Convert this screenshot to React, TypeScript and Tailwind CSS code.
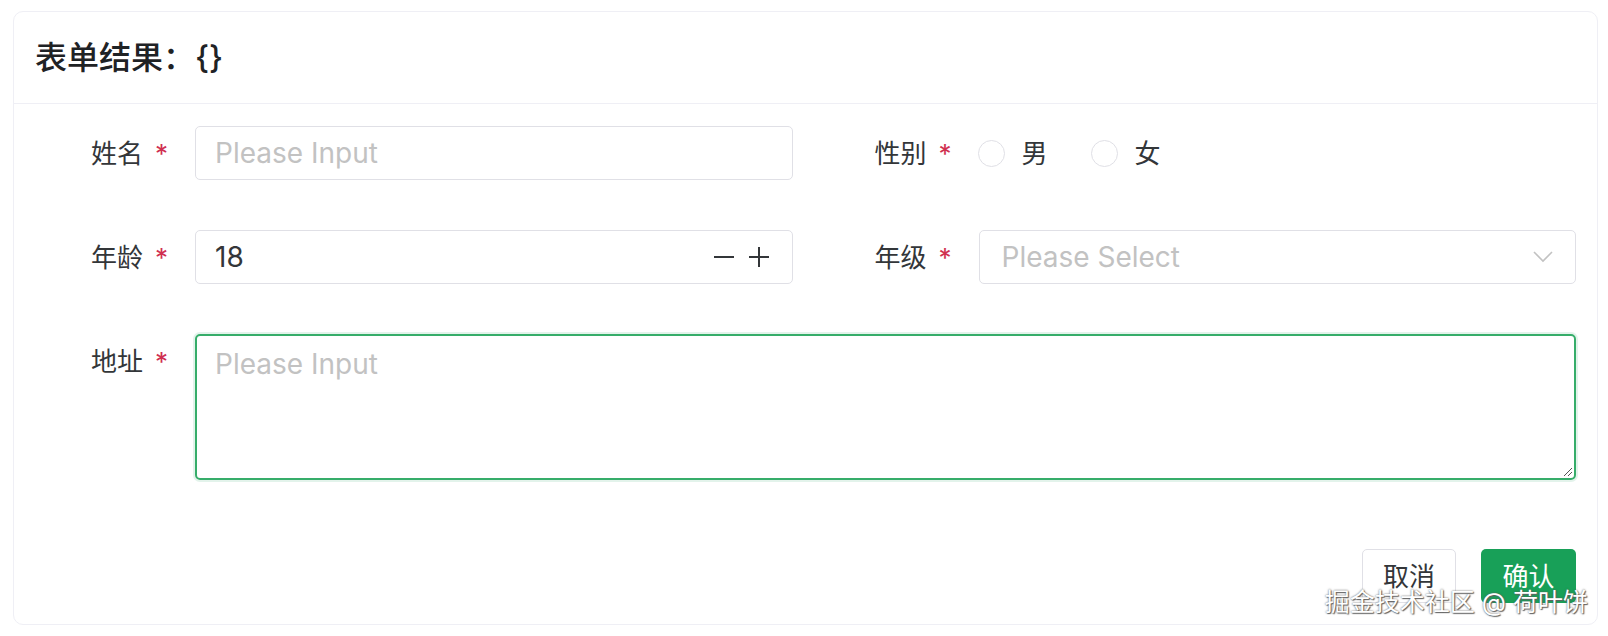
import React from "react";

const labelCls =
  "w-[160px] shrink-0 h-[54px] flex items-center justify-end pr-[27px] text-[26px] text-[#333639]";

function Label({ text }: { text: string }) {
  return (
    <div className={labelCls}>
      <span>{text}</span>
      <span className="ml-[12px] text-[#d03050]">*</span>
    </div>
  );
}

function Radio({ text }: { text: string }) {
  return (
    <label className="flex items-center">
      <span className="w-[27px] h-[27px] rounded-full border-[1.5px] border-[#e0e0e6] bg-white" />
      <span className="ml-[17px] text-[26px] text-[#333639]">{text}</span>
    </label>
  );
}

export default function App() {
  return (
    <div className="relative w-[1608px] h-[636px] bg-white font-[Inter,'Noto_Sans_CJK_SC',sans-serif]">
      <div className="ml-[13px] pt-[11px] w-[1585px]">
        <div className="rounded-[10px] border border-[#efeff5] bg-white">
          {/* Header */}
          <div className="h-[92px] flex items-center px-[21px] border-b border-[#efeff5]">
            <h2 className="text-[32px] font-medium text-[#1f2225] leading-none">
              表单结果：{"{}"}
            </h2>
          </div>

          {/* Form body */}
          <div className="px-[21px] pt-[22px] pb-[21px]">
            <div className="grid grid-cols-2 gap-x-[26px]">
              <div className="flex mb-[50px]">
                <Label text="姓名" />
                <div className="flex-1 h-[54px] rounded-[5px] border border-[#e0e0e6] flex items-center px-[19px] text-[28px] text-[#c2c2c2]">
                  Please Input
                </div>
              </div>
              <div className="flex mb-[50px]">
                <Label text="性别" />
                <div className="flex-1 h-[54px] flex items-center gap-[43px] -ml-[1px]">
                  <Radio text="男" />
                  <Radio text="女" />
                </div>
              </div>

              <div className="flex mb-[50px]">
                <Label text="年龄" />
                <div className="flex-1 h-[54px] rounded-[5px] border border-[#e0e0e6] flex items-center pl-[19px] pr-[22px] text-[28px] text-[#333639]">
                  <span className="flex-1">18</span>
                  <svg width="22" height="22" viewBox="0 0 22 22" className="mr-[13px]">
                    <line x1="1" y1="11" x2="21" y2="11" stroke="#333639" strokeWidth="2" />
                  </svg>
                  <svg width="22" height="22" viewBox="0 0 22 22">
                    <line x1="1" y1="11" x2="21" y2="11" stroke="#333639" strokeWidth="2" />
                    <line x1="11" y1="1" x2="11" y2="21" stroke="#333639" strokeWidth="2" />
                  </svg>
                </div>
              </div>
              <div className="flex mb-[50px]">
                <Label text="年级" />
                <div className="flex-1 h-[54px] rounded-[5px] border border-[#e0e0e6] flex items-center pl-[22px] pr-[22px] text-[28px] text-[#c2c2c2]">
                  <span className="flex-1">Please Select</span>
                  <svg width="20" height="12" viewBox="0 0 20 12">
                    <polyline points="1,1 10,10 19,1" fill="none" stroke="#c2c2c2" strokeWidth="1.6" />
                  </svg>
                </div>
              </div>

              <div className="col-span-2 flex mb-[50px]">
                <Label text="地址" />
                <div className="relative flex-1 h-[146px] rounded-[5px] border-2 border-[#36ad6a] shadow-[0_0_0_2px_rgba(24,160,88,0.12)] px-[18px] pt-[7px] text-[28px] text-[#c2c2c2]">
                  Please Input
                  <svg width="10" height="10" viewBox="0 0 10 10" className="absolute right-[1px] bottom-[1px]">
                    <line x1="9" y1="1" x2="1" y2="9" stroke="#555" strokeWidth="1" />
                    <line x1="9" y1="5" x2="5" y2="9" stroke="#555" strokeWidth="1" />
                  </svg>
                </div>
              </div>
            </div>

            <div className="flex justify-end gap-[25px] mt-[19px]">
              <button className="w-[94px] h-[54px] rounded-[5px] border border-[#e0e0e6] bg-white text-[26px] text-[#333639]">
                取消
              </button>
              <button className="w-[95px] h-[54px] rounded-[5px] bg-[#18a058] text-[26px] text-white">
                确认
              </button>
            </div>
          </div>
        </div>
      </div>

      {/* Watermark */}
      <div className="absolute right-[20px] top-[584px] text-[25px] text-white [text-shadow:0_0_2px_#555,1px_1px_1px_#666]">
        掘金技术社区 @ 荷叶饼
      </div>
    </div>
  );
}
